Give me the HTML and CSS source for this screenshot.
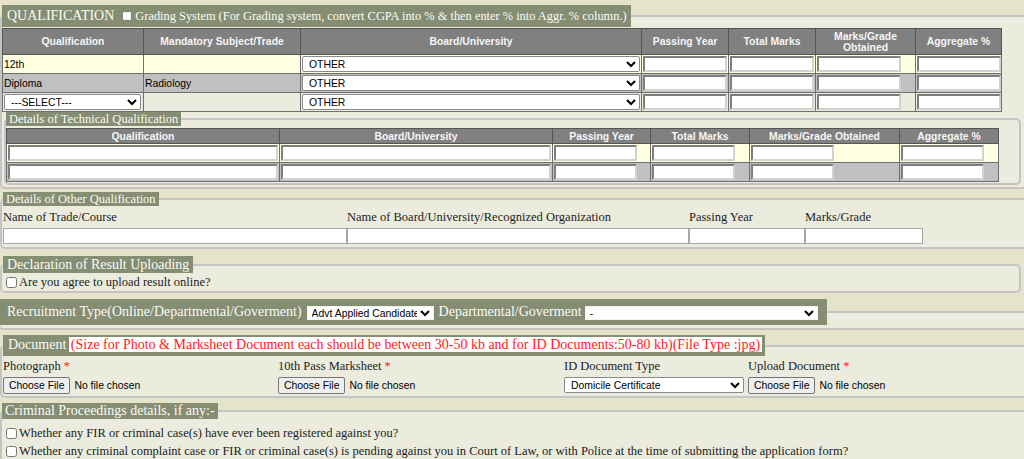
FILE: index.html
```html
<!DOCTYPE html>
<html lang="en">
<head>
<meta charset="utf-8">
<title>Qualification Form</title>
<link rel="stylesheet" href="styles.css">
</head>
<body>
<div class="page">

  <fieldset class="fs fs-ext fs-qual">
    <legend class="lg lg-qual">QUALIFICATION<input type="checkbox" class="lg-chk"><span class="lg-note">Grading System (For Grading system, convert CGPA into % &amp; then enter % into Aggr. % column.)</span></legend>
    <table class="grid qtab">
      <thead>
        <tr>
          <th>Qualification</th>
          <th>Mandatory Subject/Trade</th>
          <th>Board/University</th>
          <th>Passing Year</th>
          <th>Total Marks</th>
          <th>Marks/Grade<br>Obtained</th>
          <th>Aggregate %</th>
        </tr>
      </thead>
      <tbody>
        <tr class="r-yel">
          <td>12th</td>
          <td></td>
          <td><select class="sel"><option>OTHER</option></select></td>
          <td><input class="inp" type="text"></td>
          <td><input class="inp" type="text"></td>
          <td><input class="inp" type="text"></td>
          <td><input class="inp" type="text"></td>
        </tr>
        <tr class="r-sil">
          <td>Diploma</td>
          <td>Radiology</td>
          <td><select class="sel"><option>OTHER</option></select></td>
          <td><input class="inp" type="text"></td>
          <td><input class="inp" type="text"></td>
          <td><input class="inp" type="text"></td>
          <td><input class="inp" type="text"></td>
        </tr>
        <tr>
          <td><select class="sel sel-q"><option>---SELECT---</option></select></td>
          <td></td>
          <td><select class="sel"><option>OTHER</option></select></td>
          <td><input class="inp" type="text"></td>
          <td><input class="inp" type="text"></td>
          <td><input class="inp" type="text"></td>
          <td><input class="inp" type="text"></td>
        </tr>
      </tbody>
    </table>

    <fieldset class="fs fs-tech">
      <legend class="lg lg-sub">Details of Technical Qualification</legend>
      <table class="grid ttab">
        <thead>
          <tr>
            <th>Qualification</th>
            <th>Board/University</th>
            <th>Passing Year</th>
            <th>Total Marks</th>
            <th>Marks/Grade Obtained</th>
            <th>Aggregate %</th>
          </tr>
        </thead>
        <tbody>
          <tr class="r-yel">
            <td><input class="inp inp-full" type="text"></td>
            <td><input class="inp inp-full" type="text"></td>
            <td><input class="inp inp-t" type="text"></td>
            <td><input class="inp inp-t" type="text"></td>
            <td><input class="inp inp-t" type="text"></td>
            <td><input class="inp inp-t" type="text"></td>
          </tr>
          <tr class="r-sil">
            <td><input class="inp inp-full" type="text"></td>
            <td><input class="inp inp-full" type="text"></td>
            <td><input class="inp inp-t" type="text"></td>
            <td><input class="inp inp-t" type="text"></td>
            <td><input class="inp inp-t" type="text"></td>
            <td><input class="inp inp-t" type="text"></td>
          </tr>
        </tbody>
      </table>
    </fieldset>
  </fieldset>

  <fieldset class="fs fs-ext fs-other">
    <legend class="lg lg-sub">Details of Other Qualification</legend>
    <div class="oq">
      <span class="lbl">Name of Trade/Course</span>
      <span class="lbl">Name of Board/University/Recognized Organization</span>
      <span class="lbl">Passing Year</span>
      <span class="lbl">Marks/Grade</span>
      <input class="oq-in" type="text">
      <input class="oq-in" type="text">
      <input class="oq-in" type="text">
      <input class="oq-in" type="text">
    </div>
  </fieldset>

  <fieldset class="fs fs-decl">
    <legend class="lg lg-decl">Declaration of Result Uploading</legend>
    <label class="chkline chkline-decl"><input type="checkbox" class="chk">Are you agree to upload result online?</label>
  </fieldset>

  <fieldset class="fs fs-ext fs-rec">
    <legend class="lg lg-rec">Recruitment Type(Online/Departmental/Goverment)<select class="rsel rsel-a"><option>Advt Applied Candidate</option></select><span class="rec-lbl">Departmental/Goverment</span><select class="rsel rsel-b"><option>-</option></select></legend>
  </fieldset>

  <fieldset class="fs fs-ext fs-doc">
    <legend class="lg lg-doc">Document <span class="doc-note">(Size for Photo &amp; Marksheet Document each should be between 30-50 kb and for ID Documents:50-80 kb)(File Type :jpg)</span></legend>
    <div class="docgrid">
      <span class="lbl">Photograph <span class="req">*</span></span>
      <span class="lbl">10th Pass Marksheet <span class="req">*</span></span>
      <span class="lbl">ID Document Type</span>
      <span class="lbl">Upload Document <span class="req">*</span></span>
      <span><input type="file" class="file"></span>
      <span><input type="file" class="file"></span>
      <span><select class="sel sel-doc"><option>Domicile Certificate</option></select></span>
      <span><input type="file" class="file"></span>
    </div>
  </fieldset>

  <fieldset class="fs fs-ext fs-crim">
    <legend class="lg lg-crim">Criminal Proceedings details, if any:-</legend>
    <label class="chkline chkline-crim"><input type="checkbox" class="chk">Whether any FIR or criminal case(s) have ever been registered against you?</label>
    <label class="chkline chkline-crim"><input type="checkbox" class="chk">Whether any criminal complaint case or FIR or criminal case(s) is pending against you in Court of Law, or with Police at the time of submitting the application form?</label>
  </fieldset>

</div>
</body>
</html>
```

FILE: styles.css
```css
* { box-sizing: border-box; }

html, body {
  margin: 0;
  padding: 0;
}

body {
  background: #e5e4cb;
  font-family: "Liberation Serif", "Times New Roman", serif;
  font-size: 12.5px;
  color: #1c1c1c;
}

.page {
  width: 1024px;
  height: 459px;
  overflow: hidden;
  padding-top: 5px;
}

/* ---------- fieldsets ---------- */
.fs {
  display: block;
  margin: 0;
  padding: 0;
  border: 2px solid #c4c4c4;
  border-radius: 5px;
  background: #ebecdd;
  width: 1021px;
  min-inline-size: 0;
}

.fs-ext { width: 1050px; }

.fs-qual { padding: 1px 0 0 0; }

.fs-tech {
  width: 1017px;
  margin: 0 0 2px 2px;
  padding: 2px 0 1px 0;
}

.fs-other { margin-top: 3px; padding: 4px 0 3px 1px; }

.fs-decl { margin-top: 7px; padding: 2px 0 1px 0; }

.fs-rec { margin: 6px 0 0 -2px; padding: 0 0 3px 0; }

.fs-doc { margin-top: 5px; padding: 3px 0 2px 1px; }

.fs-crim { margin-top: 5px; padding: 5px 0 0 0; }

/* ---------- legends ---------- */
.lg {
  background: #858d73;
  color: #fbfbf6;
  font-size: 14px;
  line-height: 17px;
  padding: 0 4px;
  margin: 0;
  white-space: nowrap;
}

.lg-sub {
  font-size: 12.5px;
  line-height: 14px;
  padding: 0 3px;
}

.lg-qual {
  line-height: 22px;
  padding: 0 4px 0 5px;
}

.lg-chk {
  width: 10px;
  height: 10px;
  margin: 0 3px 0 8px;
  vertical-align: -1px;
  accent-color: #fff;
}

.lg-note {
  font-size: 12.4px;
}

.lg-decl { margin-left: 1px; }

.lg-rec {
  line-height: 26px;
  padding: 0 9px 0 7px;
}

.lg-doc {
  line-height: 16px;
  padding: 2px 3px 3px 5px;
}

.doc-note {
  background: #fff;
  color: #ff1a1a;
  padding: 0 2px;
  margin-left: -1px;
}

.lg-crim {
  line-height: 16px;
  padding: 0 3px;
}

/* ---------- recruitment selects ---------- */
.rsel {
  height: 14px;
  font-family: "Liberation Sans", Arial, sans-serif;
  font-size: 10.4px;
  color: #000;
  background: #fff;
  border: 1px solid #f2f2f2;
  border-radius: 0;
  padding: 0;
  vertical-align: middle;
  margin: 0;
}

.rsel-a { width: 127px; margin-left: 5px; }
.rsel-b { width: 233px; margin-left: 3px; }

.rec-lbl { margin-left: 5px; }

/* ---------- tables ---------- */
.grid {
  border-collapse: collapse;
  table-layout: fixed;
  font-family: "Liberation Sans", Arial, sans-serif;
  font-size: 10.4px;
  color: #000;
}

.grid th {
  background: #808080;
  color: #f6f6f6;
  font-weight: bold;
  border: 1px solid #555;
  padding: 0 2px;
  text-align: center;
  line-height: 11px;
}

.grid td {
  border: 1px solid #6f6f6f;
  padding: 1px;
  height: 19px;
  white-space: nowrap;
  vertical-align: middle;
}

.qtab { width: 999px; }
.qtab th { height: 26px; }
.qtab th:nth-child(1) { width: 141px; }
.qtab th:nth-child(2) { width: 157px; }
.qtab th:nth-child(3) { width: 341px; }
.qtab th:nth-child(4) { width: 87px; }
.qtab th:nth-child(5) { width: 87px; }
.qtab th:nth-child(6) { width: 100px; }
.qtab th:nth-child(7) { width: 86px; }

.ttab { width: 992px; }
.ttab th { height: 15px; }
.ttab th:nth-child(1) { width: 273px; }
.ttab th:nth-child(2) { width: 273px; }
.ttab th:nth-child(3) { width: 98px; }
.ttab th:nth-child(4) { width: 99px; }
.ttab th:nth-child(5) { width: 150px; }
.ttab th:nth-child(6) { width: 99px; }

.r-yel td { background: #ffffe1; }
.r-sil td { background: #c0c0c0; }

.inp {
  display: block;
  width: 84px;
  height: 16px;
  margin: 0;
  padding: 0 2px;
  border: 2px inset #d2d2d2;
  background: #fff;
  font: inherit;
}

.inp-full { width: 100%; }
.inp-t { width: 83px; }

.sel {
  display: block;
  width: 100%;
  height: 16px;
  margin: 0;
  padding: 0 2px;
  font-family: "Liberation Sans", Arial, sans-serif;
  font-size: 10.4px;
  color: #000;
  background: #fff;
  border: 1px solid #8a8a8a;
  border-radius: 2px;
}

.sel-q { width: 137px; }

/* ---------- other qualification ---------- */
.oq {
  display: grid;
  grid-template-columns: 344px 342px 116px 118px;
  row-gap: 4px;
}

.lbl {
  line-height: 14px;
  white-space: nowrap;
}

.oq-in {
  height: 16px;
  margin: 0;
  border: 1px solid #a7a7a7;
  background: #fff;
  padding: 0 2px;
}

/* ---------- checkbox lines ---------- */
.chkline {
  display: flex;
  align-items: center;
  padding-left: 4px;
  white-space: nowrap;
}

.chkline-decl { height: 15px; }
.chkline-crim { height: 18px; }

.chk {
  width: 11px;
  height: 11px;
  margin: 0 2px 0 0;
  flex: none;
}

/* ---------- documents ---------- */
.docgrid {
  display: grid;
  grid-template-columns: 275px 286px 184px auto;
  row-gap: 4px;
}

.req {
  color: #ff1a1a;
}

.file {
  font-family: "Liberation Sans", Arial, sans-serif;
  font-size: 10.4px;
  color: #000;
  height: 17px;
  margin: 0;
}

.file::file-selector-button {
  font-family: "Liberation Sans", Arial, sans-serif;
  font-size: 10.4px;
  height: 17px;
  padding: 0 5px;
  margin-right: 4px;
  border: 1px solid #767676;
  border-radius: 2px;
  background: #efefef;
  color: #000;
}

.sel-doc { width: 180px; height: 16px; }
```
